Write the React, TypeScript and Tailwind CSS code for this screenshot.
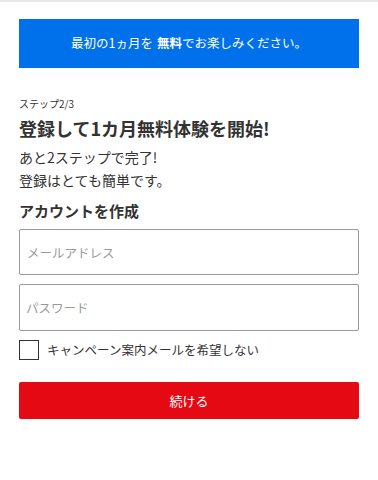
import React from 'react';

export default function App() {
  return (
    <div
      className="w-[378px] h-[480px] bg-white border-t-2 border-[#e8e8e8] text-[#333]"
      style={{ fontFamily: '"Noto Sans CJK JP", "Noto Sans", sans-serif' }}
    >
      <div className="px-[19px] pt-[17px]">
        <div className="h-[49px] bg-[#0071eb] flex items-center justify-center text-white text-[12.5px]">
          最初の1ヵ月を<span className="font-bold ml-1">無料</span>でお楽しみください。
        </div>

        <div className="mt-[29px] text-[10px] leading-[14px]">ステップ2/3</div>
        <h1 className="mt-[5px] text-[18px] leading-[24px] font-bold">登録して1カ月無料体験を開始!</h1>

        <p className="mt-[6px] text-[14px] leading-[23px]">
          あと2ステップで完了!
          <br />
          登録はとても簡単です。
        </p>

        <h2 className="mt-[8px] text-[15px] leading-[22px] font-bold">アカウントを作成</h2>

        <div className="mt-[7px] flex flex-col gap-[9px]">
          <input
            className="h-[46px] w-full border border-[#999] rounded-[2px] px-[7px] text-[12.5px] placeholder:text-[#999] outline-none"
            placeholder="メールアドレス"
          />
          <input
            type="password"
            className="h-[47px] w-full border border-[#999] rounded-[2px] px-[6px] text-[12.5px] placeholder:text-[#999] outline-none"
            placeholder="パスワード"
          />
        </div>

        <label className="mt-[9px] flex items-center gap-[8px]">
          <span className="w-[20px] h-[20px] border border-[#333] bg-white" />
          <span className="text-[12.5px] leading-[20px]">キャンペーン案内メールを希望しない</span>
        </label>

        <button className="mt-[22px] w-full h-[37px] bg-[#e50914] rounded-[2px] text-white text-[13px]">
          続ける
        </button>
      </div>
    </div>
  );
}
